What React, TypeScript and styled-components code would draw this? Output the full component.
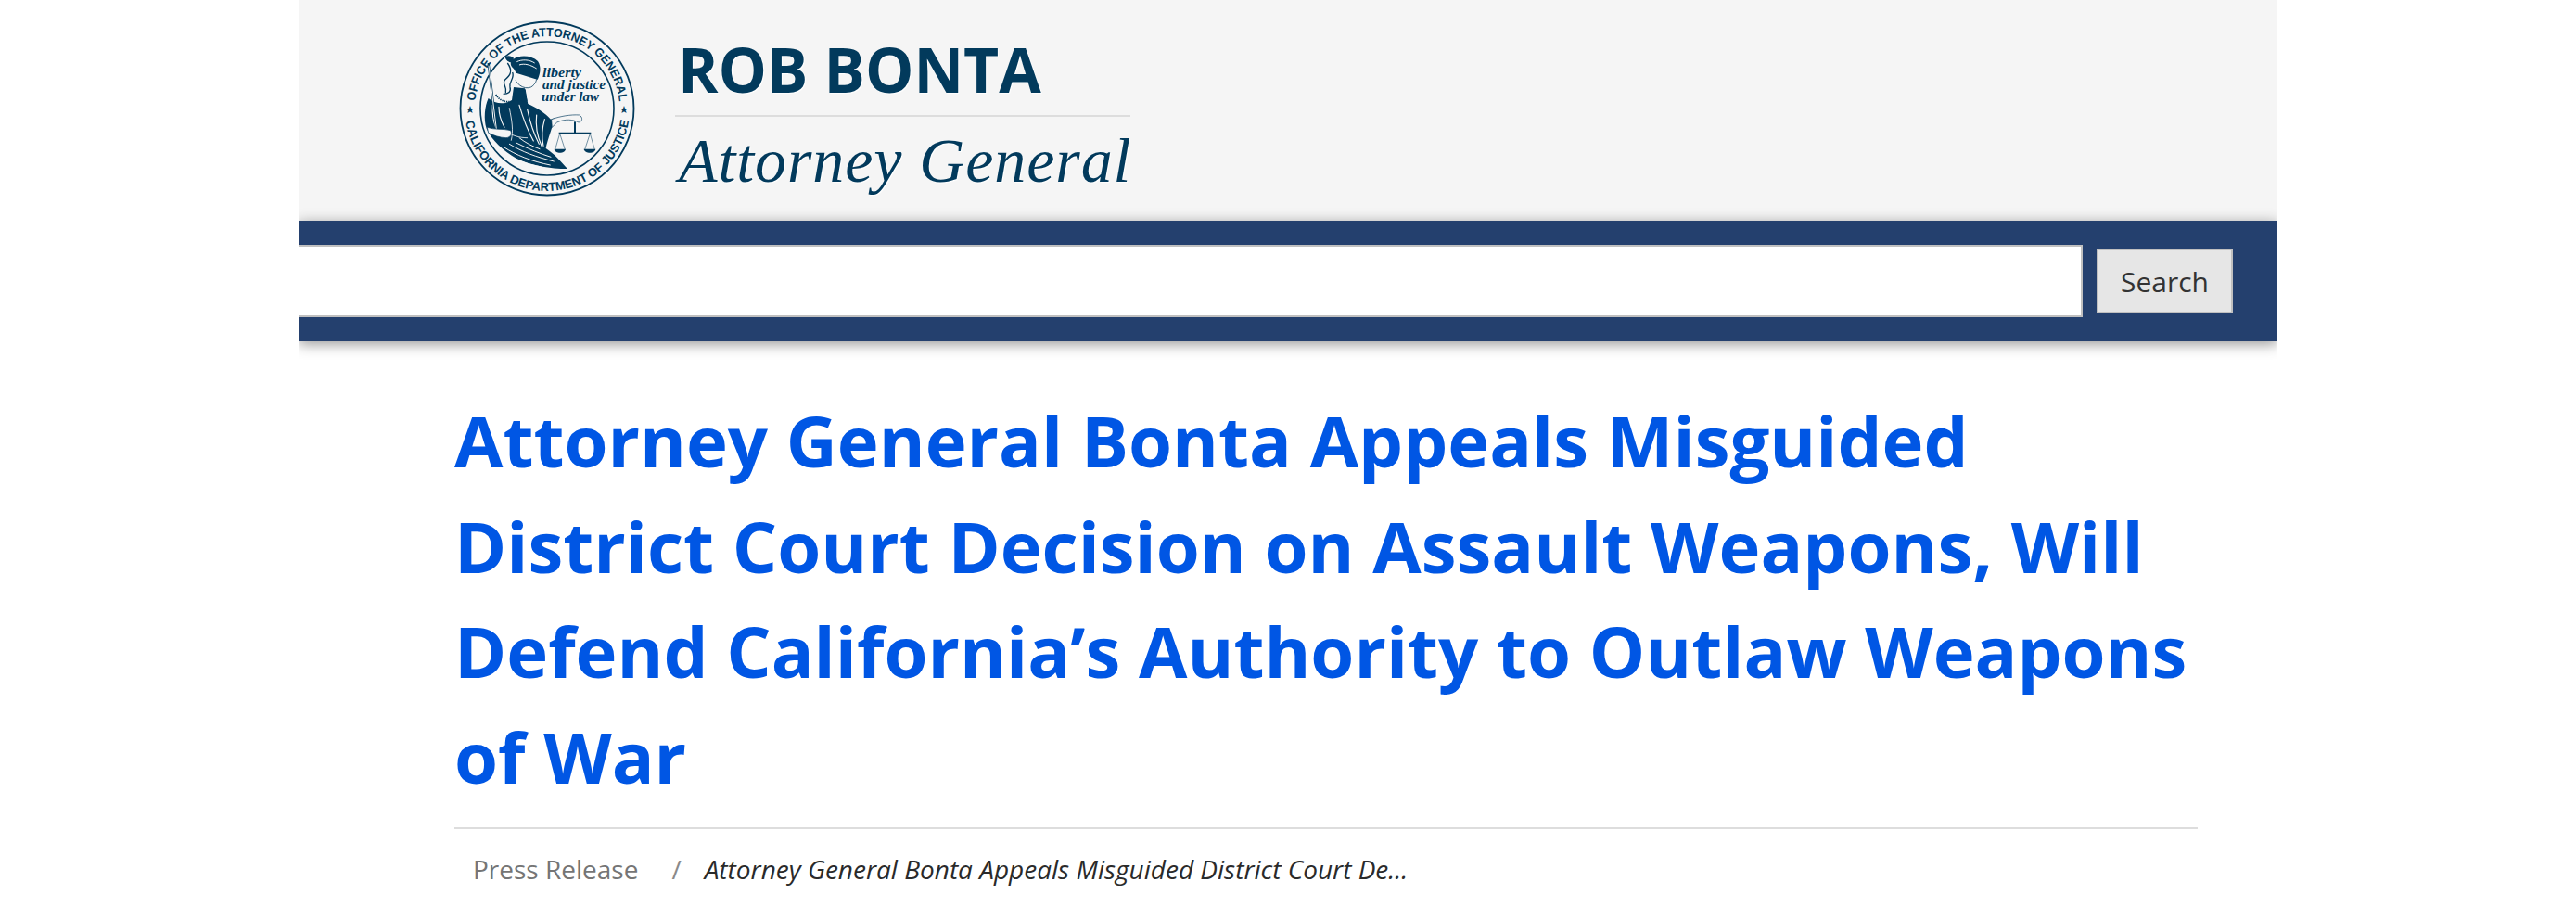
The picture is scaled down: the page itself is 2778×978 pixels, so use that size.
import React from 'react';
import styled, { createGlobalStyle } from 'styled-components';

const Global = createGlobalStyle`
  html, body { margin: 0; padding: 0; background: #fff; overflow: hidden; }
  body { font-family: "Open Sans", "Liberation Sans", sans-serif; }
`;

const Page = styled.div`
  width: 2134px;
  margin-left: 322px;
  height: 978px;
  overflow: hidden;
`;
const Header = styled.header`
  height: 238px;
  background: #f5f5f5;
  display: flex;
  align-items: flex-start;
  padding: 21px 0 0 172px;
  box-sizing: border-box;
  gap: 42px;
`;
const Seal = styled.svg`
  width: 192px;
  height: 192px;
  flex: none;
`;
const Branding = styled.div`
  width: 491px;
  display: flex;
  flex-direction: column;
`;
const Name = styled.div`
  font-weight: 700;
  font-size: 66px;
  line-height: 92px;
  color: #023a5c;
  text-shadow: 1px 1px 1px #fff;
  border-bottom: 2px solid #ddd;
  padding: 7px 0 0 3px;
  height: 105px;
  box-sizing: border-box;
  white-space: nowrap;
`;
const Role = styled.div`
  font-family: "Liberation Serif", serif;
  font-style: italic;
  font-size: 68px;
  line-height: 78px;
  letter-spacing: 0.9px;
  padding: 8px 0 0 4px;
  color: #023a5c;
  text-shadow: 1px 1px 1px #fff;
  white-space: nowrap;
`;
const Nav = styled.div`
  height: 130px;
  background: #24406e;
  box-shadow: 0 3px 14px rgba(0,0,0,0.42);
  display: flex;
  align-items: flex-start;
  padding: 26px 48px 0 0;
  box-sizing: border-box;
`;
const SearchInput = styled.div`
  width: 1924px;
  height: 78px;
  background: #fff;
  border: 2px solid #c0c0c0;
  border-left: 0;
  box-sizing: border-box;
`;
const SearchButton = styled.button`
  margin: 4px 0 0 15px;
  width: 147px;
  height: 70px;
  padding: 0;
  background: #e6e6e6;
  border: 2px solid #c0c0c0;
  border-radius: 0;
  font-family: "Open Sans", sans-serif;
  font-size: 30px;
  color: #333;
`;
const Main = styled.main`
  padding: 0 86px 0 168px;
`;
const Title = styled.h1`
  margin: 0;
  padding: 50px 0 20px;
  font-size: 76px;
  line-height: 113.6px;
  font-weight: 700;
  color: #0056e4;
  border-bottom: 2px solid #ddd;
`;
const Crumbs = styled.nav`
  display: flex;
  align-items: center;
  padding: 23px 0 0 20px;
  font-size: 28px;
  line-height: 40px;
  color: #757575;
  white-space: nowrap;
`;
const Sep = styled.span`
  margin: 0 25px 0 36px;
  color: #8a8a8a;
`;
const Current = styled.span`
  font-style: italic;
  color: #2a2a2a;
`;

const C = '#023a5c';
const BG = '#f5f5f5';

const SealArt = () => (
  <Seal viewBox="0 0 192 192" aria-label="Seal of the Office of the Attorney General">
    <defs>
      <path id="sealTop" d="M 18 96 A 78 78 0 0 1 174 96" />
      <path id="sealBottom" d="M 7 96 A 89 89 0 0 0 185 96" />
    </defs>
    <circle cx="96" cy="96" r="93.5" fill="none" stroke={C} strokeWidth="1.8" />
    <circle cx="96" cy="96" r="72" fill="none" stroke={C} strokeWidth="1.6" />
    <g fontFamily="Liberation Sans, sans-serif" fontWeight="700" fontSize="13" fill={C}>
      <text>
        <textPath href="#sealTop" startOffset="8" textLength="229" lengthAdjust="spacingAndGlyphs">OFFICE OF THE ATTORNEY GENERAL</textPath>
      </text>
      <text>
        <textPath href="#sealBottom" startOffset="14" textLength="252" lengthAdjust="spacingAndGlyphs">CALIFORNIA DEPARTMENT OF JUSTICE</textPath>
      </text>
    </g>
    <g fontFamily="DejaVu Sans, sans-serif" fontSize="11" fill={C} textAnchor="middle">
      <text x="13" y="101">★</text>
      <text x="179" y="101">★</text>
    </g>
    <g fontFamily="Liberation Serif, serif" fontStyle="italic" fontWeight="700" fontSize="15" fill={C}>
      <text x="91" y="62" textLength="42" lengthAdjust="spacingAndGlyphs">liberty</text>
      <text x="91" y="75" textLength="68" lengthAdjust="spacingAndGlyphs">and justice</text>
      <text x="90" y="88" textLength="62" lengthAdjust="spacingAndGlyphs">under law</text>
    </g>
    <g transform="translate(16 29) scale(0.3333)">
      {/* body and robe */}
      <path
        d="M132 132 L168 136 L178 186 C205 198 232 214 252 236 L264 232 C258 262 242 300 236 330 C262 346 286 374 306 396 C250 396 190 386 140 362 C98 338 60 302 44 266 C34 236 38 194 50 168 C72 186 102 190 126 174 Z"
        fill={C}
      />
      {/* robe folds */}
      <g stroke={BG} fill="none" strokeLinecap="round">
        <path d="M64 190 C62 216 66 242 74 262 M84 196 C84 220 92 244 102 262 M150 190 C162 232 176 270 196 306 M176 204 C184 242 196 282 214 316 M206 222 C202 256 208 290 222 322 M232 236 C224 264 222 296 228 322" strokeWidth="3.5" />
        <path d="M100 326 C140 352 190 372 250 384 M118 316 C160 342 206 358 262 372 M92 340 C128 364 176 382 222 390 M140 312 C180 332 220 348 252 358 M150 296 C170 312 194 324 216 332" strokeWidth="3" />
        <path d="M118 200 C126 240 132 272 124 304 M110 276 C128 290 152 296 176 296" strokeWidth="2.5" />
      </g>
      {/* neck and beads */}
      <path d="M134 136 C150 146 162 150 170 138 L176 178 L140 176 Z" fill={C} />
      <path d="M74 156 C86 176 108 184 132 176" stroke={C} strokeWidth="5" strokeDasharray="4 3" fill="none" />
      {/* hair, knot and blindfold */}
      <path d="M130 42 C150 26 190 28 210 48 C222 66 218 88 210 106 L136 74 C120 66 118 50 130 42 Z" fill={C} />
      <path d="M104 34 C112 28 126 30 132 38 L128 52 C118 54 106 46 104 34 Z" fill={C} />
      <path d="M142 50 C158 42 182 42 200 54 M150 60 C166 54 188 60 206 72" stroke={BG} strokeWidth="3" fill="none" />
      <path d="M130 68 L204 92 L210 108 L140 86 Z" fill={C} />
      {/* profile */}
      <path d="M206 106 C204 114 202 120 197 124 C194 130 184 136 170 134 C158 132 146 124 138 110" stroke={C} strokeWidth="2.4" fill="none" />
      {/* curls */}
      <path d="M112 54 C132 82 118 96 104 108 C92 120 112 130 106 150 M128 84 C136 104 116 112 120 132 C124 146 116 154 98 154" stroke={C} strokeWidth="4" fill="none" />
      {/* sword */}
      <path d="M50 54 L76 268" stroke={C} strokeWidth="7" fill="none" />
      <path d="M51 62 L76 268" stroke={BG} strokeWidth="3" fill="none" />
      {/* sword hand */}
      <path d="M46 262 C68 270 100 266 122 272 C128 284 122 294 108 296 C88 296 66 288 50 280 Z" fill={BG} stroke={C} strokeWidth="2" />
      {/* arm and hand */}
      <path d="M254 236 C282 226 318 220 344 222 C356 228 356 244 342 246 C324 236 298 234 272 246 L256 262 Z" fill={BG} stroke={C} strokeWidth="2" />
      {/* scales */}
      <path d="M330 244 V282" stroke={C} strokeWidth="6" fill="none" />
      <path d="M278 281 H382" stroke={C} strokeWidth="6" fill="none" />
      <path d="M281 282 L266 334 M281 282 L298 334 M379 282 L362 334 M379 282 L394 334" stroke={C} strokeWidth="1.6" fill="none" />
      <path d="M263 332 H300 C298 348 266 348 263 332 Z M359 332 H397 C395 348 362 348 359 332 Z" fill={C} />
    </g>
  </Seal>
);

export default function App() {
  return (
    <Page>
      <Global />
      <Header>
        <SealArt />
        <Branding>
          <Name>ROB BONTA</Name>
          <Role>Attorney General</Role>
        </Branding>
      </Header>
      <Nav>
        <SearchInput />
        <SearchButton>Search</SearchButton>
      </Nav>
      <Main>
        <Title>Attorney General Bonta Appeals Misguided District Court Decision on Assault Weapons, Will Defend California’s Authority to Outlaw Weapons of War</Title>
        <Crumbs>
          <span>Press Release</span>
          <Sep>/</Sep>
          <Current>Attorney General Bonta Appeals Misguided District Court De...</Current>
        </Crumbs>
      </Main>
    </Page>
  );
}
